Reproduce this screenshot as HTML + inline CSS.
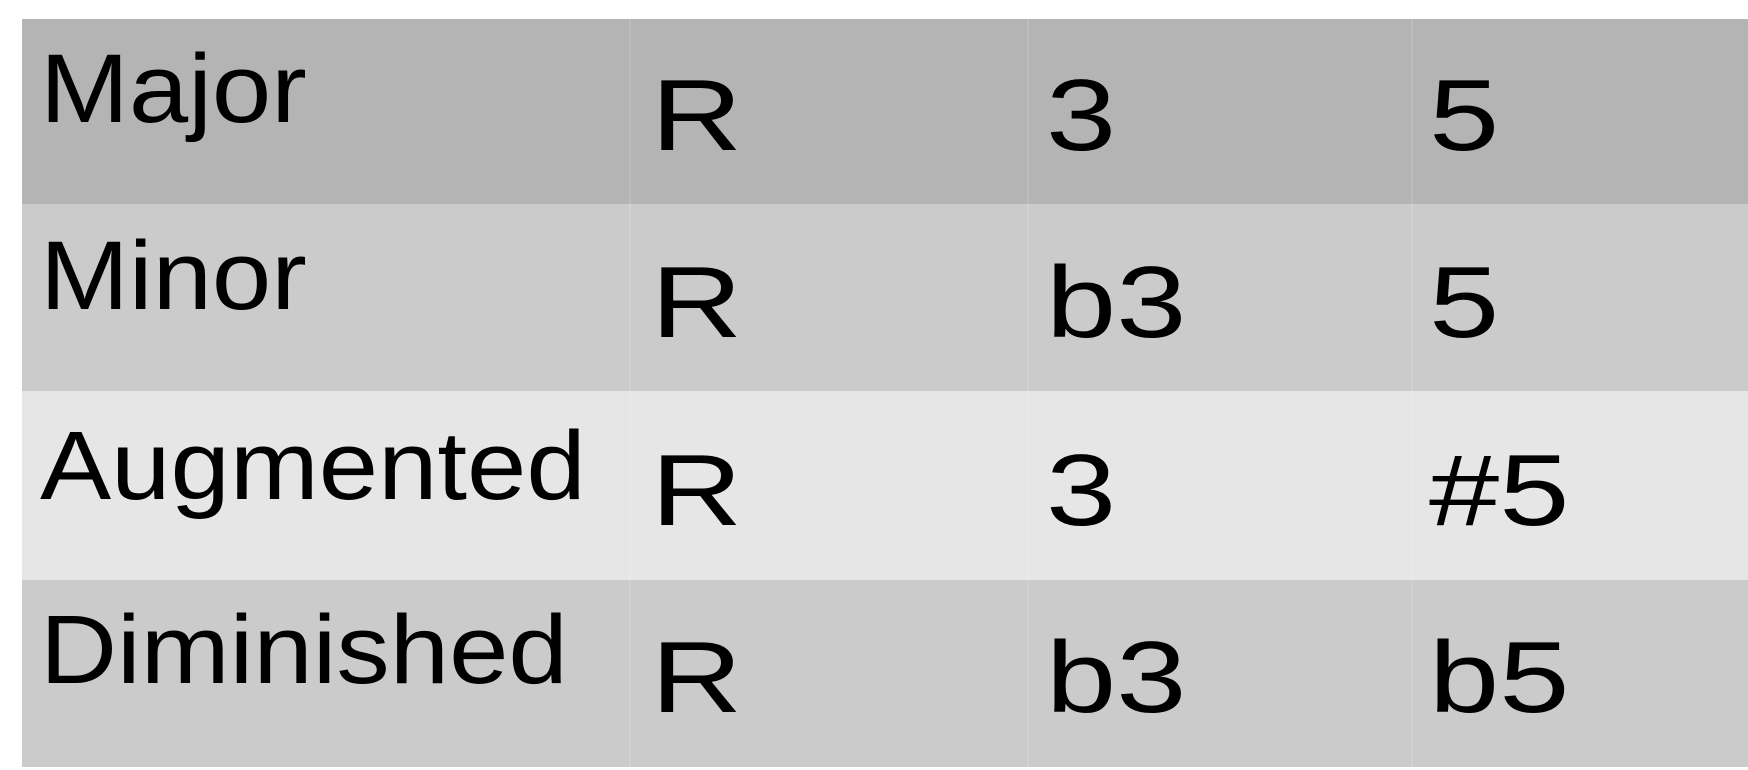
<!DOCTYPE html>
<html><head><meta charset="utf-8"><style>
html,body{margin:0;padding:0;background:#fff;width:1748px;height:770px;overflow:hidden;position:relative;font-family:"Liberation Sans",Arial,sans-serif;}
.r{position:absolute;left:22px;right:0;}
.v{position:absolute;top:19px;height:748px;width:2px;background:rgba(255,255,255,0.12);}
.t{position:absolute;font-size:97px;line-height:97px;color:#000;transform:scaleX(1.10);transform-origin:0 0;white-space:nowrap;}
.n{position:absolute;font-size:101px;line-height:100px;color:#000;transform:scaleX(1.25);transform-origin:0 0;white-space:nowrap;}
</style></head><body>
<div class="r" style="top:19px;height:185px;background:#b4b4b4"></div>
<div class="r" style="top:204px;height:187px;background:#cbcbcb"></div>
<div class="r" style="top:391px;height:189px;background:#e6e6e6"></div>
<div class="r" style="top:580px;height:187px;background:#cbcbcb"></div>
<div class="v" style="left:629px"></div>
<div class="v" style="left:1027px"></div>
<div class="v" style="left:1411px"></div>

<div class="t" style="left:40px;top:40px">Major</div>
<div class="t" style="left:40px;top:227px">Minor</div>
<div class="t" style="left:40px;top:417px">Augmented</div>
<div class="t" style="left:40px;top:601px">Diminished</div>

<div class="n" style="left:651px;top:66px">R</div>
<div class="n" style="left:651px;top:253px">R</div>
<div class="n" style="left:651px;top:441px">R</div>
<div class="n" style="left:651px;top:628px">R</div>

<div class="n" style="left:1046px;top:66px">3</div>
<div class="n" style="left:1046px;top:253px">b3</div>
<div class="n" style="left:1046px;top:441px">3</div>
<div class="n" style="left:1046px;top:628px">b3</div>

<div class="n" style="left:1429px;top:66px">5</div>
<div class="n" style="left:1429px;top:253px">5</div>
<div class="n" style="left:1429px;top:441px">#5</div>
<div class="n" style="left:1429px;top:628px">b5</div>
</body></html>
